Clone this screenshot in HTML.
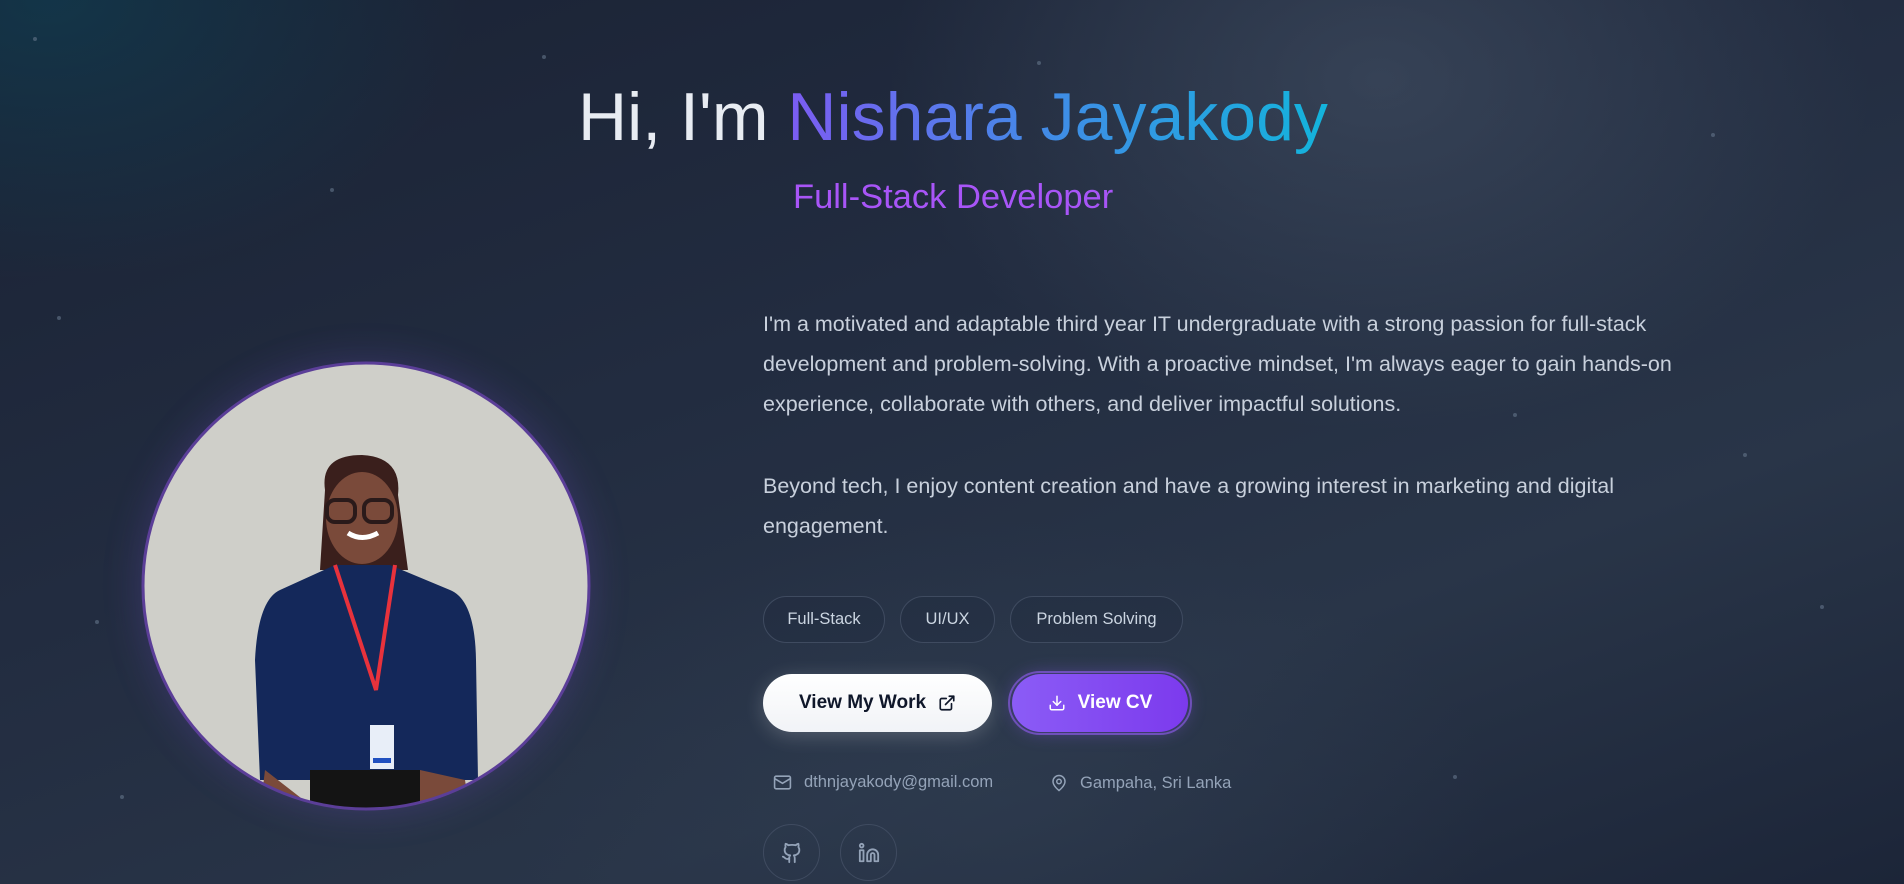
<!DOCTYPE html>
<html><head><meta charset="utf-8"><style>
*{margin:0;padding:0;box-sizing:border-box}
html,body{width:1904px;height:884px;overflow:hidden}
body{font-family:"Liberation Sans",sans-serif;color:#cbd5e1;position:relative;
background:
radial-gradient(ellipse 700px 500px at 1380px 80px,rgba(71,85,105,.55),transparent 70%),
radial-gradient(ellipse 600px 400px at 50px 0px,rgba(14,65,85,.6),transparent 70%),
radial-gradient(ellipse 700px 400px at 1000px 800px,rgba(51,65,85,.45),transparent 70%),
linear-gradient(160deg,#1a2234 0%,#222c40 40%,#293548 70%,#1c2538 100%);}
.abs{position:absolute}
h1{position:absolute;left:578px;top:78px;font-size:68px;font-weight:300;color:#e8ecf2;white-space:nowrap}
h1 b{font-weight:400;background:linear-gradient(90deg,#7c5cf2,#3f8de6 50%,#13b4dc);-webkit-background-clip:text;background-clip:text;color:transparent}
.sub{left:793px;top:178px;font-size:34.5px;color:#a855f7;white-space:nowrap}
.p{left:763px;width:990px;font-size:21.5px;line-height:40px;color:#c8d0dc}
.tag{top:596px;height:47px;border:1px solid #3f4b60;border-radius:24px;font-size:16.5px;color:#cbd5e1;display:flex;align-items:center;justify-content:center;background:rgba(30,41,59,.3)}
.btn{top:674px;height:58px;border-radius:29px;display:flex;align-items:center;justify-content:center;font-weight:700;font-size:19px;gap:12px}
.ct{top:773px;font-size:16.5px;color:#94a3b8;display:flex;align-items:center;gap:12px;white-space:nowrap}
.soc{top:824px;width:57px;height:57px;border:1px solid #3f4b60;border-radius:50%;display:flex;align-items:center;justify-content:center}
.dot{position:absolute;width:4px;height:4px;border-radius:50%;background:#64748b;opacity:.6}
</style></head><body>
<div class="dot" style="left:1037px;top:61px"></div>
<div class="dot" style="left:542px;top:55px"></div>
<div class="dot" style="left:330px;top:188px"></div>
<div class="dot" style="left:57px;top:316px"></div>
<div class="dot" style="left:1711px;top:133px"></div>
<div class="dot" style="left:1743px;top:453px"></div>
<div class="dot" style="left:1513px;top:413px"></div>
<div class="dot" style="left:95px;top:620px"></div>
<div class="dot" style="left:120px;top:795px"></div>
<div class="dot" style="left:1453px;top:775px"></div>
<div class="dot" style="left:1820px;top:605px"></div>
<div class="dot" style="left:33px;top:37px"></div>

<h1>Hi, I'm <b>Nishara Jayakody</b></h1>
<div class="abs sub">Full-Stack Developer</div>

<div class="abs" style="left:142px;top:362px;width:448px;height:448px;border-radius:50%;box-shadow:0 0 40px rgba(139,92,246,.22)"></div>
<svg class="abs" style="left:140px;top:360px" width="452" height="452" viewBox="0 0 452 452">
<defs><clipPath id="c"><circle cx="226" cy="226" r="223"/></clipPath></defs>
<g clip-path="url(#c)">
<rect width="452" height="452" fill="#cfcfc9"/>
<path d="M185 130 Q180 95 222 95 Q262 97 258 135 L268 210 L180 210 Z" fill="#3a1f1c"/>
<ellipse cx="222" cy="158" rx="36" ry="46" fill="#7a4a3a"/>
<rect x="187" y="140" width="28" height="22" rx="8" fill="none" stroke="#2a1a1a" stroke-width="4"/>
<rect x="224" y="140" width="28" height="22" rx="8" fill="none" stroke="#2a1a1a" stroke-width="4"/>
<path d="M208 173 Q222 182 238 173" stroke="#fff" stroke-width="5" fill="none"/>
<path d="M195 205 L250 205 L310 230 Q335 240 336 300 L338 420 L120 420 L115 300 Q118 240 140 230 Z" fill="#14285a"/>
<rect x="170" y="410" width="110" height="50" fill="#141414"/>
<path d="M125 410 L170 445 L170 452 L120 452 Z" fill="#7a4a3a"/>
<path d="M280 410 L325 420 L330 452 L280 452 Z" fill="#7a4a3a"/>
<path d="M195 205 L236 330 L255 205" stroke="#e8323c" stroke-width="4" fill="none"/>
<rect x="230" y="365" width="24" height="44" fill="#e8eef8"/>
<rect x="233" y="398" width="18" height="5" fill="#2050c0"/>
</g>
<circle cx="226" cy="226" r="223" fill="none" stroke="#5b3e98" stroke-width="3"/>
</svg>

<div class="abs p" style="top:304px">I'm a motivated and adaptable third year IT undergraduate with a strong passion for full-stack development and problem-solving. With a proactive mindset, I'm always eager to gain hands-on experience, collaborate with others, and deliver impactful solutions.</div>
<div class="abs p" style="top:466px;width:960px">Beyond tech, I enjoy content creation and have a growing interest in marketing and digital<br>engagement.</div>

<div class="abs tag" style="left:763px;width:122px">Full-Stack</div>
<div class="abs tag" style="left:900px;width:95px">UI/UX</div>
<div class="abs tag" style="left:1010px;width:173px">Problem Solving</div>

<div class="abs btn" style="left:763px;width:229px;background:linear-gradient(180deg,#fff,#f1f3f7);color:#0f172a;box-shadow:0 4px 20px rgba(255,255,255,.2)">View My Work
<svg width="18" height="18" viewBox="0 0 24 24" fill="none" stroke="#0f172a" stroke-width="2.2" stroke-linecap="round" stroke-linejoin="round"><path d="M18 13v6a2 2 0 0 1-2 2H5a2 2 0 0 1-2-2V8a2 2 0 0 1 2-2h6"/><path d="M15 3h6v6"/><path d="M10 14 21 3"/></svg></div>
<div class="abs" style="left:1008px;top:671px;width:184px;height:64px;border-radius:32px;border:2px solid #6a4fb0"></div>
<div class="abs btn" style="left:1012px;width:176px;background:linear-gradient(90deg,#8b5cf6,#7c3aed);color:#fff;box-shadow:0 0 18px rgba(139,92,246,.4)">
<svg width="18" height="18" viewBox="0 0 24 24" fill="none" stroke="#fff" stroke-width="2" stroke-linecap="round" stroke-linejoin="round"><path d="M21 15v4a2 2 0 0 1-2 2H5a2 2 0 0 1-2-2v-4"/><path d="M7 10l5 5 5-5"/><path d="M12 15V3"/></svg>View CV</div>

<div class="abs ct" style="left:773px"><svg width="19" height="19" viewBox="0 0 24 24" fill="none" stroke="#94a3b8" stroke-width="2"><rect x="2" y="4" width="20" height="16" rx="2"/><path d="m22 7-10 6L2 7"/></svg>dthnjayakody@gmail.com</div>
<div class="abs ct" style="left:1050px"><svg width="18" height="20" viewBox="0 0 24 24" fill="none" stroke="#94a3b8" stroke-width="2"><path d="M20 10c0 6-8 12-8 12s-8-6-8-12a8 8 0 0 1 16 0Z"/><circle cx="12" cy="10" r="3"/></svg>Gampaha, Sri Lanka</div>

<div class="abs soc" style="left:763px"><svg width="22" height="22" viewBox="0 0 24 24" fill="none" stroke="#94a3b8" stroke-width="2" stroke-linecap="round" stroke-linejoin="round"><path d="M15 22v-4a4.8 4.8 0 0 0-1-3.5c3 0 6-2 6-5.5.08-1.25-.27-2.48-1-3.5.28-1.15.28-2.35 0-3.5 0 0-1 0-3 1.5-2.64-.5-5.36-.5-8 0C6 2 5 2 5 2c-.3 1.15-.3 2.35 0 3.5A5.4 5.4 0 0 0 4 9c0 3.5 3 5.5 6 5.5-.39.49-.68 1.05-.85 1.65-.17.6-.22 1.23-.15 1.85v4"/><path d="M9 18c-4.51 2-5-2-7-2"/></svg></div>
<div class="abs soc" style="left:840px"><svg width="22" height="22" viewBox="0 0 24 24" fill="none" stroke="#94a3b8" stroke-width="2" stroke-linecap="round" stroke-linejoin="round"><path d="M16 8a6 6 0 0 1 6 6v7h-4v-7a2 2 0 0 0-4 0v7h-4v-7a6 6 0 0 1 6-6z"/><rect x="2" y="9" width="4" height="12"/><circle cx="4" cy="4" r="2"/></svg></div>
</body></html>
